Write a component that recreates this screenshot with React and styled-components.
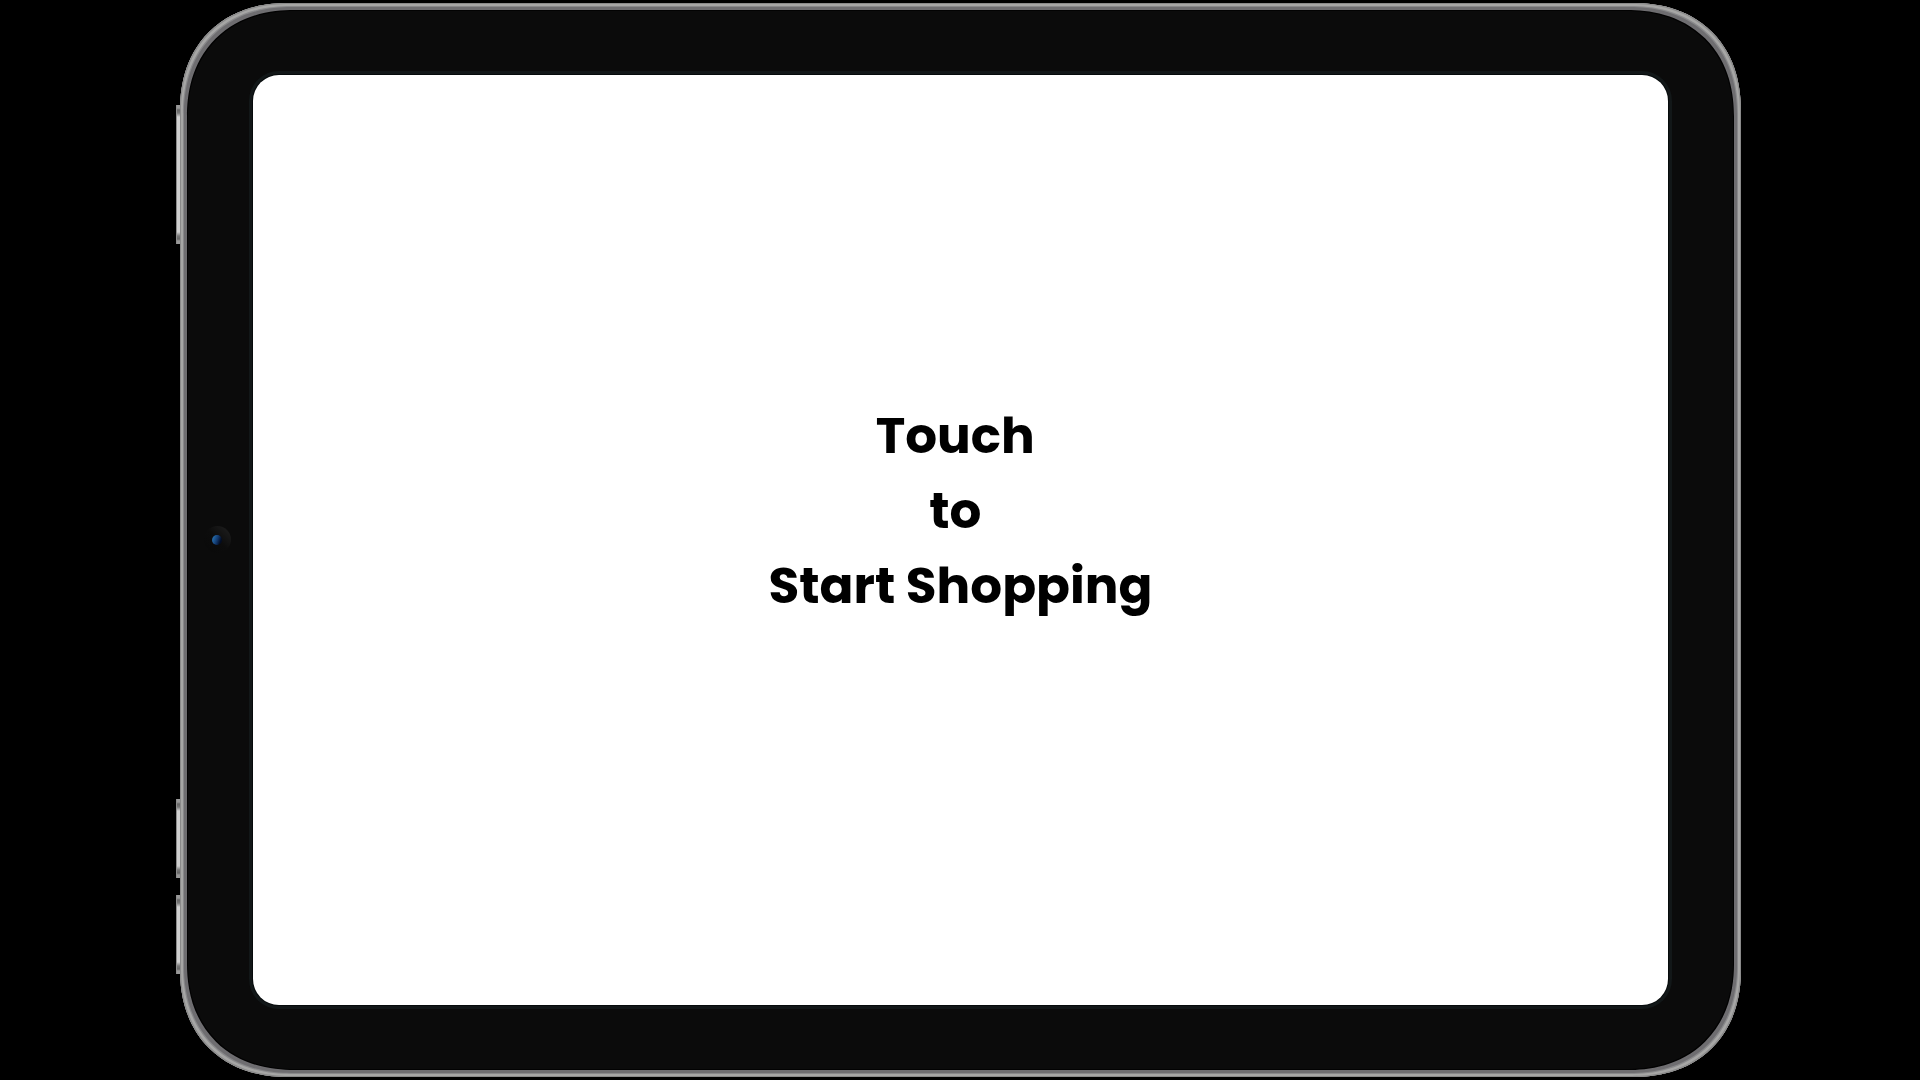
import React from "react";
import styled, { createGlobalStyle } from "styled-components";

const GlobalStyle = createGlobalStyle`
  *, *::before, *::after { box-sizing: border-box; }
  body {
    margin: 0;
    background: #000;
    font-family: Poppins, Inter, "Open Sans", sans-serif;
  }
`;

const Page = styled.main`
  display: flex;
  justify-content: center;
  height: 100vh;
  padding: 3px 0 3px 1px;
  overflow: hidden;
`;

const Tablet = styled.div`
  position: relative;
  display: flex;
  height: 100%;
  aspect-ratio: 1561 / 1074;
  padding: 72px 73px;
  border-radius: 96px;
  background: #0b0b0b;
  box-shadow:
    inset 0 0 0 1px #8a8a8a,
    inset 0 0 0 3px #a6a6a5,
    inset 0 0 0 4px #88888a,
    inset 0 0 0 7px #6e6d70,
    inset 0 0 0 8px #020202;

  @supports (corner-shape: superellipse(1.2)) {
    border-radius: 108px;
    corner-shape: superellipse(1.15);
  }
`;

const SideButton = styled.span`
  position: absolute;
  left: -4px;
  top: ${({ $top }) => $top}px;
  width: 4px;
  height: ${({ $length }) => $length}px;
  background: linear-gradient(#999 0 3px, #666 5px, #777 8px, #d0d0d0 12px calc(100% - 12px), #777 calc(100% - 8px), #666 calc(100% - 5px), #999 calc(100% - 3px));
  border-left: 1px solid #8c8c8c;
`;

const Camera = styled.span`
  position: absolute;
  left: 24px;
  top: calc(50% - 14px);
  display: grid;
  place-items: center;
  width: 27px;
  height: 27px;
  border-radius: 50%;
  background: linear-gradient(225deg, #202020, #0c0c0c 50%, #090909);
`;

const Lens = styled.span`
  width: 10px;
  height: 10px;
  margin-right: 1px;
  border-radius: 50%;
  background: linear-gradient(110deg, #2263a0 20%, #123a70 50%, #020c24 80%);
`;

const Screen = styled.button`
  flex: 1;
  display: flex;
  align-items: center;
  justify-content: center;
  padding: 0 0 60px;
  border: 0;
  border-radius: 26px;
  background: #fff;
  box-shadow: 0 0 0 1px #060a0b, 0 0 0 4px #121718;
  color: #000;
  font: inherit;
  cursor: pointer;
`;

const Prompt = styled.span`
  font-size: 50px;
  font-weight: 700;
  line-height: 75px;
  text-align: center;
  white-space: pre;
`;

const sideButtons = [
  { top: 102, length: 139 },
  { top: 796, length: 79 },
  { top: 892, length: 79 },
];

export default function App() {
  return (
    <>
      <GlobalStyle />
      <Page>
        <Tablet>
          {sideButtons.map(({ top, length }) => (
            <SideButton key={top} $top={top} $length={length} />
          ))}
          <Camera>
            <Lens />
          </Camera>
          <Screen type="button">
            <Prompt>{"Touch \nto \nStart Shopping"}</Prompt>
          </Screen>
        </Tablet>
      </Page>
    </>
  );
}
